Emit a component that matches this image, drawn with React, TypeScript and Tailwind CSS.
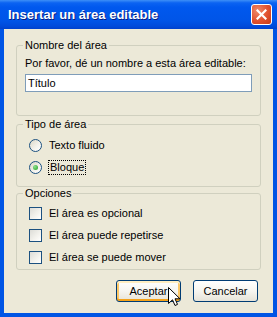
import React from "react"

const font = { fontFamily: '"Liberation Sans", Arial, sans-serif' }

function Radio({ checked }: { checked?: boolean }) {
  return (
    <span className="relative inline-flex h-[13px] w-[13px] shrink-0 items-center justify-center rounded-full border border-[#1c5180] bg-[linear-gradient(135deg,#dcd8c8_0%,#f4f3ee_60%,#ffffff_100%)]">
      {checked && <span className="h-[5px] w-[5px] rounded-full bg-[radial-gradient(circle_at_35%_35%,#8fe08f,#21a121)]" />}
    </span>
  )
}

function Check() {
  return (
    <span className="inline-block h-[13px] w-[13px] shrink-0 border border-[#1c5180] bg-[linear-gradient(135deg,#dcdcd7_0%,#f4f3ee_60%,#ffffff_100%)]" />
  )
}

function Group({ title, children, className }: { title: string; children: React.ReactNode; className?: string }) {
  return (
    <fieldset className={`rounded-[3px] border border-[#d0d0bf] px-2 ${className ?? ""}`}>
      <legend className="-ml-[2px] px-[2px] text-[11px] leading-[13px] text-black">{title}</legend>
      {children}
    </fieldset>
  )
}

export default function App() {
  return (
    <div className="relative flex h-[317px] w-[277px] flex-col overflow-hidden bg-[#0055e5] text-[11px] text-black" style={font}>
      {/* title bar */}
      <div className="flex h-[29px] shrink-0 items-center justify-between bg-[linear-gradient(180deg,#3d8ff7_0%,#0b63f2_10%,#0058ee_25%,#0055e8_70%,#004bdb_90%,#0041cc_100%)] pl-[8px] pr-[5px]">
        <span className="text-[13px] font-bold leading-none text-white [text-shadow:1px_1px_0_#0a1e80]">
          Insertar un área editable
        </span>
        <span className="flex h-[21px] w-[21px] items-center justify-center rounded-[3px] border border-white bg-[radial-gradient(circle_at_30%_30%,#f08a6a,#e0512f_55%,#c43a18)]">
          <svg width="11" height="11" viewBox="0 0 11 11">
            <path d="M1.5 1.5 L9.5 9.5 M9.5 1.5 L1.5 9.5" stroke="white" strokeWidth="2.2" strokeLinecap="square" />
          </svg>
        </span>
      </div>

      {/* body */}
      <div className="mx-[4px] mb-[4px] flex flex-1 flex-col bg-[#ece9d8] px-3 pt-[10px]">
        <Group title="Nombre del área" className="pb-[23px]">
          <div className="mt-[5px] leading-[13px]">Por favor, dé un nombre a esta área editable:</div>
          <div className="mt-[4px] flex h-[18px] items-center border border-[#7f9db9] bg-white px-[2px] leading-[13px]">
            Título
          </div>
        </Group>

        <Group title="Tipo de área" className="mt-[2px] pb-[12px]">
          <div className="mt-[8px] flex flex-col gap-[9px] pl-[4px]">
            <label className="flex h-[13px] items-center gap-[7px] leading-[13px]">
              <Radio />
              <span>Texto fluido</span>
            </label>
            <label className="flex h-[13px] items-center gap-[6px] leading-[13px]">
              <Radio checked />
              <span className="border border-dotted border-black px-[1px]">Bloque</span>
            </label>
          </div>
        </Group>

        <Group title="Opciones" className="mt-0 pb-[5px]">
          <div className="mt-[7px] flex flex-col gap-[9px] pl-[4px]">
            <label className="flex h-[13px] items-center gap-[7px] leading-[13px]">
              <Check />
              <span>El área es opcional</span>
            </label>
            <label className="flex h-[13px] items-center gap-[7px] leading-[13px]">
              <Check />
              <span>El área puede repetirse</span>
            </label>
            <label className="flex h-[13px] items-center gap-[7px] leading-[13px]">
              <Check />
              <span>El área se puede mover</span>
            </label>
          </div>
        </Group>

        <div className="mt-[10px] flex justify-end gap-[12px] pr-[3px]">
          <button className="h-[22px] w-[65px] rounded-[3px] border border-[#003c74] bg-[linear-gradient(180deg,#ffffff_0%,#f6f5f0_50%,#e6e3d8_100%)] text-[11px] shadow-[inset_0_2px_0_#ffeec2,inset_0_-2px_0_#f4a21a,inset_2px_0_0_#fcc869,inset_-2px_0_0_#fcc869]">
            Aceptar
          </button>
          <button className="h-[22px] w-[65px] rounded-[3px] border border-[#003c74] bg-[linear-gradient(180deg,#ffffff_0%,#f6f5f0_50%,#e6e3d8_100%)] text-[11px]">
            Cancelar
          </button>
        </div>
      </div>

      {/* mouse pointer */}
      <svg className="absolute left-[168px] top-[287px]" width="13" height="20" viewBox="0 0 13 20">
        <path d="M0.5 0.5 L0.5 16.5 L4.5 12.8 L7 18.5 L9.5 17.4 L7 11.8 L12 11.8 Z" fill="white" stroke="black" strokeWidth="1" strokeLinejoin="miter" />
      </svg>
    </div>
  )
}
